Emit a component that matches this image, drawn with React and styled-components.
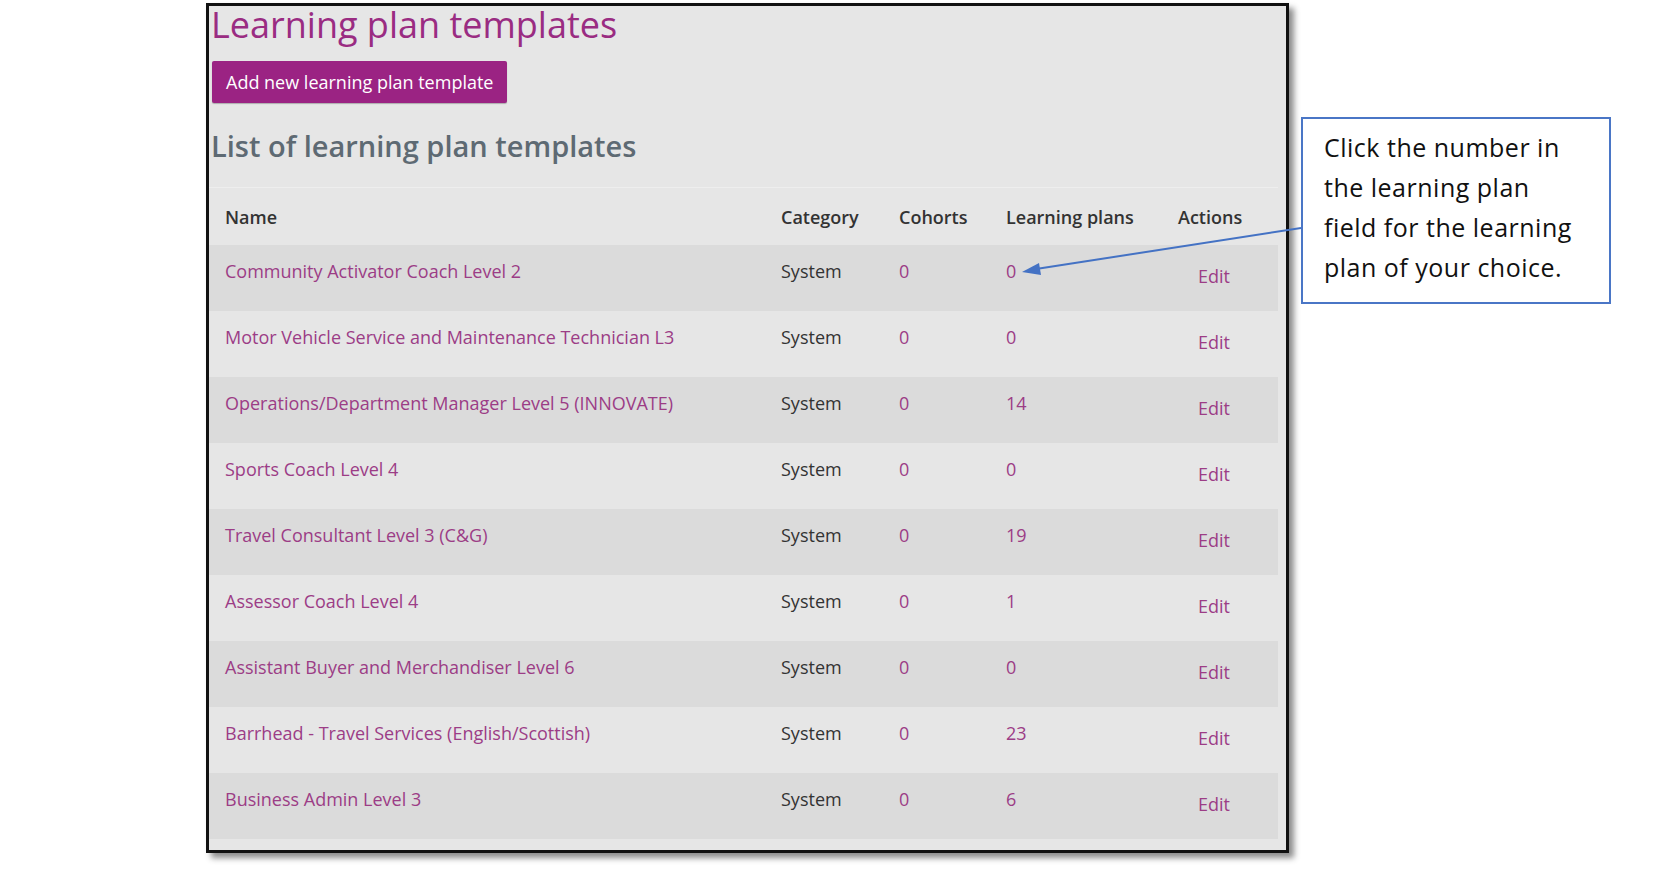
import React from 'react';
import styled, { createGlobalStyle } from 'styled-components';

const GlobalStyle = createGlobalStyle`
  html, body {
    margin: 0;
    padding: 0;
    background: #ffffff;
  }
  body {
    font-family: "Open Sans", "Liberation Sans", sans-serif;
  }
`;

const Page = styled.div`
  position: relative;
  width: 1654px;
  height: 870px;
  display: flex;
  flex-direction: row;
  align-items: flex-start;
  padding: 3px 0 0 206px;
  box-sizing: border-box;
  overflow: hidden;
`;

const Frame = styled.div`
  width: 1083px;
  height: 850px;
  box-sizing: border-box;
  border: 3px solid #111;
  background: #e6e6e6;
  box-shadow: 5px 5px 6px rgba(0, 0, 0, 0.45);
  display: flex;
  flex-direction: column;
  padding: 0 8px 0 0;
`;

const Title = styled.h1`
  margin: 0 0 0 2px;
  font-size: 36px;
  line-height: 38px;
  font-weight: 400;
  color: #9a2c82;
`;

const AddButton = styled.button`
  align-self: flex-start;
  margin: 17px 0 0 3px;
  height: 42px;
  padding: 0 14px;
  border: none;
  border-radius: 2px;
  background: #9b2383;
  color: #ffffff;
  font-family: "Open Sans", "Liberation Sans", sans-serif;
  font-size: 18px;
  box-shadow: 0 1px 1px rgba(0, 0, 0, 0.25);
`;

const SubTitle = styled.h2`
  margin: 23px 0 0 2px;
  font-size: 29px;
  line-height: 40px;
  font-weight: 600;
  color: #5e6a73;
`;

const Table = styled.div`
  margin-top: 21px;
  border-top: 1px solid #eeeeee;
  display: flex;
  flex-direction: column;
`;

const Row = styled.div`
  display: grid;
  grid-template-columns: 556px 118px 107px 172px 116px;
  height: ${p => (p.$head ? '57px' : '66px')};
  align-items: ${p => (p.$head ? 'center' : 'start')};
  background: ${p => (p.$shaded ? '#dbdbdb' : 'transparent')};
  font-size: 18px;
  line-height: 24px;
`;

const Cell = styled.div`
  padding: ${p => (p.$head ? '0' : '14px')} 0 0 16px;
  color: ${p => (p.$link ? '#9c3d86' : '#333333')};
  font-weight: ${p => (p.$head ? 600 : 400)};
  white-space: nowrap;
`;

const EditCell = styled(Cell)`
  padding-top: 19px;
  padding-left: 36px;
`;

const Callout = styled.div`
  margin: 114px 0 0 12px;
  width: 310px;
  height: 187px;
  box-sizing: border-box;
  border: 2px solid #4a76c6;
  background: #ffffff;
  padding: 8px 0 0 21px;
  font-family: "Open Sans", "Noto Sans", sans-serif;
  font-size: 25px;
  letter-spacing: 0.5px;
  line-height: 40px;
  color: #111;
  white-space: nowrap;
`;

const ArrowLayer = styled.svg`
  position: absolute;
  left: 0;
  top: 0;
  pointer-events: none;
`;

const rows = [
  ['Community Activator Coach Level 2', '0', '0'],
  ['Motor Vehicle Service and Maintenance Technician L3', '0', '0'],
  ['Operations/Department Manager Level 5 (INNOVATE)', '0', '14'],
  ['Sports Coach Level 4', '0', '0'],
  ['Travel Consultant Level 3 (C&G)', '0', '19'],
  ['Assessor Coach Level 4', '0', '1'],
  ['Assistant Buyer and Merchandiser Level 6', '0', '0'],
  ['Barrhead - Travel Services (English/Scottish)', '0', '23'],
  ['Business Admin Level 3', '0', '6'],
];

function App() {
  return (
    <Page>
      <GlobalStyle />
      <Frame>
        <Title>Learning plan templates</Title>
        <AddButton>Add new learning plan template</AddButton>
        <SubTitle>List of learning plan templates</SubTitle>
        <Table>
          <Row $head>
            <Cell $head>Name</Cell>
            <Cell $head>Category</Cell>
            <Cell $head>Cohorts</Cell>
            <Cell $head>Learning plans</Cell>
            <Cell $head>Actions</Cell>
          </Row>
          {
            rows.map(
              (r, idx) => {
                return (
                  <Row key={idx} $shaded={idx % 2 === 0}>
                    <Cell $link>{r[0]}</Cell>
                    <Cell>System</Cell>
                    <Cell $link>{r[1]}</Cell>
                    <Cell $link>{r[2]}</Cell>
                    <EditCell $link>Edit</EditCell>
                  </Row>
                );
              }
            )
          }
        </Table>
      </Frame>
      <Callout>
        Click the number in<br />
        the learning plan<br />
        field for the learning<br />
        plan of your choice.
      </Callout>
      <ArrowLayer width="1654" height="870" viewBox="0 0 1654 870">
        <line x1="1301" y1="228" x2="1036" y2="269" stroke="#4472c4" strokeWidth="2" />
        <polygon points="1022,272 1039,263 1041,275" fill="#4472c4" />
      </ArrowLayer>
    </Page>
  );
}

export default App;
